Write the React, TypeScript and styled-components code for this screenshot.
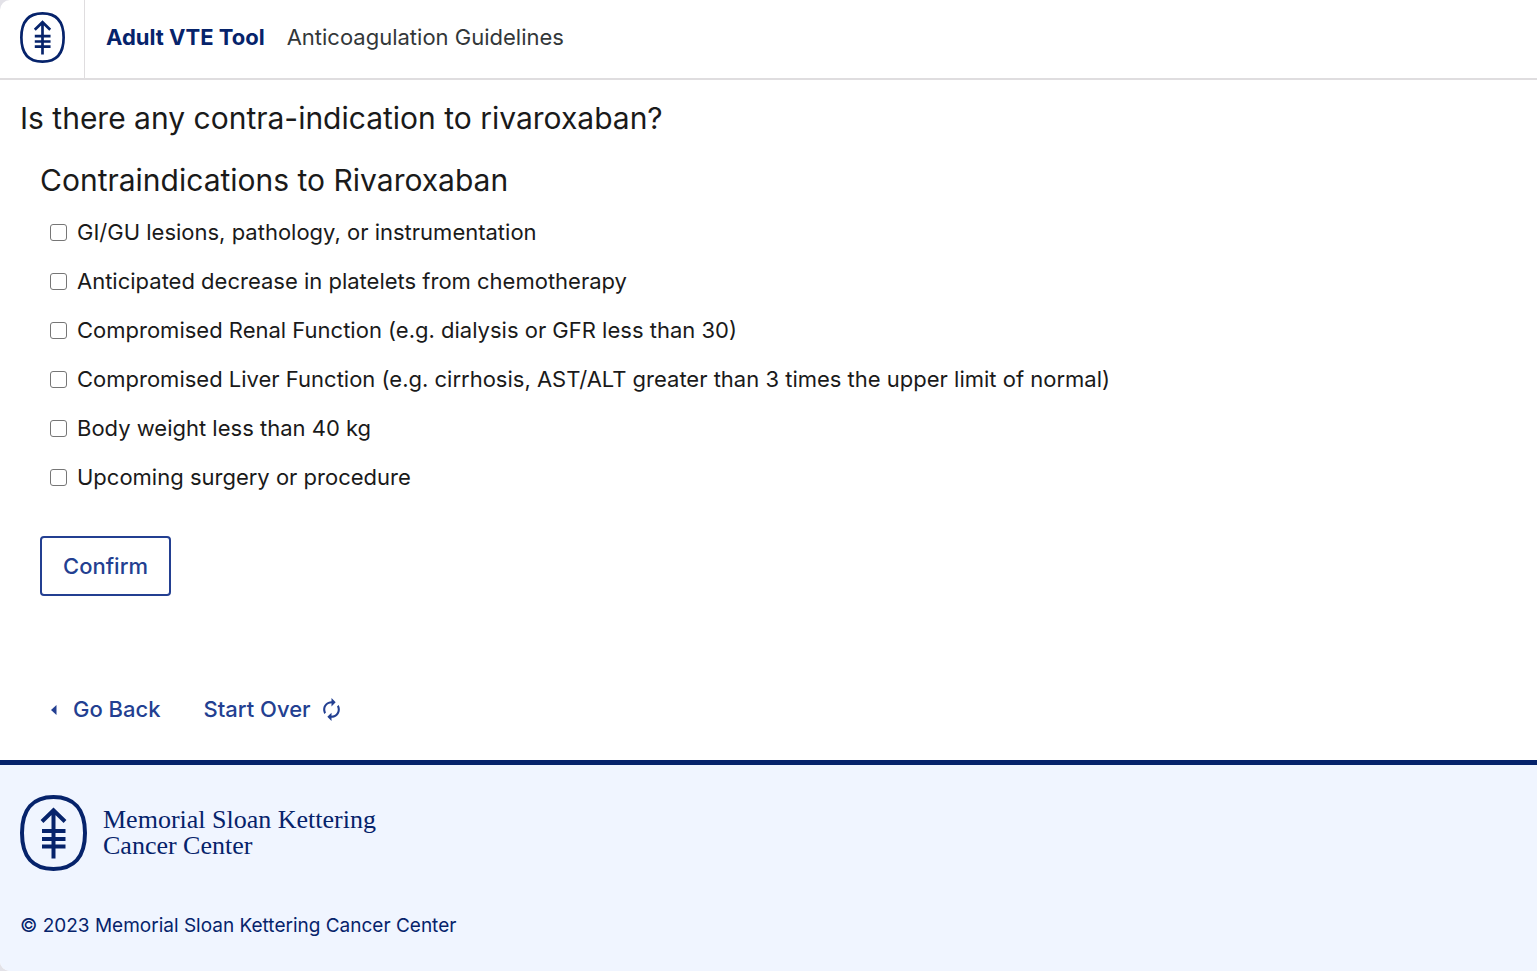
import React from "react";
import styled, { createGlobalStyle } from "styled-components";
import { MdAutorenew } from "react-icons/md";

const navy = "#06236b";
const blue = "#233f91";
const ink = "#1a1a1a";

const GlobalStyle = createGlobalStyle`
  *, *::before, *::after { box-sizing: border-box; }
  html { background: #e3e2e8; }
  body {
    margin: 0;
    color: ${ink};
    font-family: Inter, "Open Sans", sans-serif;
    font-size: 22px;
    line-height: 29px;
  }
`;

const Page = styled.div`
  display: flex;
  flex-direction: column;
  min-height: 100vh;
  overflow: hidden;
  background: #fff;
  border-radius: 10px 0 0 10px;
`;

const Header = styled.header`
  display: flex;
  align-items: stretch;
  min-height: 80px;
  border-bottom: 2px solid #dfdddf;
`;

const HomeLink = styled.a`
  display: flex;
  align-items: flex-start;
  padding: 12px 19px 0 20px;
  border-right: 1px solid #dfdddf;
`;

const Nav = styled.nav`
  display: flex;
  align-items: flex-start;
  gap: 22px;
  padding: 23px 21px 0;
`;

const NavLink = styled.a<{ $strong?: boolean }>`
  color: ${(p) => (p.$strong ? navy : "#333739")};
  font-weight: ${(p) => (p.$strong ? 700 : 400)};
  text-decoration: none;
`;

const Main = styled.main`
  padding: 18px 20px 36px;
`;

const Question = styled.h1`
  margin: 0 0 22px;
  font-size: 30px;
  font-weight: 400;
  line-height: 40px;
`;

const Form = styled.form`
  padding-left: 20px;
`;

const Group = styled.fieldset`
  margin: 0;
  padding: 0;
  border: 0;
`;

const GroupTitle = styled.legend`
  padding: 0;
  font-size: 30px;
  line-height: 40px;
`;

const Options = styled.ul`
  display: grid;
  gap: 20px;
  margin: 18px 0 0;
  padding: 0 0 0 10px;
  list-style: none;
`;

const Option = styled.label`
  display: flex;
  align-items: center;
  gap: 10px;
`;

const CheckBox = styled.input`
  appearance: none;
  flex: none;
  width: 17px;
  height: 17px;
  margin: 0;
  background: #fff;
  border: 1px solid #767676;
  border-radius: 3px;

  &:checked {
    background: ${blue};
    border-color: ${blue};
  }
`;

const ConfirmButton = styled.button`
  min-width: 131px;
  height: 60px;
  margin-top: 44px;
  padding: 0 20px;
  color: ${blue};
  background: #fff;
  border: 2px solid ${blue};
  border-radius: 4px;
  font: inherit;
  font-weight: 500;
  cursor: pointer;
`;

const Actions = styled.div`
  display: flex;
  gap: 43px;
  margin-top: 99px;
  padding-left: 30px;
`;

const Action = styled.a`
  display: inline-flex;
  align-items: center;
  color: ${blue};
  font-weight: 500;
  text-decoration: none;
`;

const BackIcon = styled.svg`
  width: 7px;
  height: 10px;
  margin-right: 16px;
`;

const RestartIcon = styled(MdAutorenew)`
  width: 25px;
  height: 25px;
  margin-left: 8px;
`;

const Footer = styled.footer`
  flex: 1;
  padding: 30px 20px;
  color: ${navy};
  background: #f0f5ff;
  border-top: 5px solid ${navy};
`;

const Brand = styled.a`
  display: flex;
  align-items: center;
  gap: 16px;
  width: fit-content;
  color: inherit;
  font-family: "Liberation Serif", serif;
  font-size: 26px;
  line-height: 26px;
  text-decoration: none;
`;

const Copyright = styled.p`
  margin: 40px 0 0;
  font-size: 19px;
  line-height: 29px;
`;

function Emblem({ width, height }: { width: number; height: number }) {
  return (
    <svg width={width} height={height} viewBox="0 0 67 76" fill="none" stroke={navy} aria-hidden="true">
      <path
        d="M33.5 2C54 2 65 14 65 38S54 74 33.5 74 2 62 2 38 13 2 33.5 2Z"
        strokeWidth="4"
      />
      <path
        d="M33.5 15V63.500M22 26.500 33.500 15.200 45 26.500M22 36H45.500M22 44H45.500M22 51.500H45.500"
        strokeWidth="4"
      />
    </svg>
  );
}

const contraindications = [
  "GI/GU lesions, pathology, or instrumentation",
  "Anticipated decrease in platelets from chemotherapy",
  "Compromised Renal Function (e.g. dialysis or GFR less than 30)",
  "Compromised Liver Function (e.g. cirrhosis, AST/ALT greater than 3 times the upper limit of normal)",
  "Body weight less than 40 kg",
  "Upcoming surgery or procedure",
];

export default function App() {
  return (
    <Page>
      <GlobalStyle />
      <Header>
        <HomeLink href="#" aria-label="Home">
          <Emblem width={45} height={51} />
        </HomeLink>
        <Nav>
          <NavLink href="#" $strong>Adult VTE Tool</NavLink>
          <NavLink href="#">Anticoagulation Guidelines</NavLink>
        </Nav>
      </Header>
      <Main>
        <Question>Is there any contra-indication to rivaroxaban?</Question>
        <Form onSubmit={(e) => e.preventDefault()}>
          <Group>
            <GroupTitle>Contraindications to Rivaroxaban</GroupTitle>
            <Options>
              {contraindications.map((text, i) => (
                <li key={text}>
                  <Option htmlFor={`option-${i}`}>
                    <CheckBox type="checkbox" id={`option-${i}`} />
                    {text}
                  </Option>
                </li>
              ))}
            </Options>
          </Group>
          <ConfirmButton type="submit">Confirm</ConfirmButton>
        </Form>
        <Actions>
          <Action href="#">
            <BackIcon viewBox="0 0 7 10" fill="currentColor" aria-hidden="true">
              <path d="M6.500 0V10L1 5Z" />
            </BackIcon>
            Go Back
          </Action>
          <Action href="#">
            Start Over
            <RestartIcon aria-hidden="true" />
          </Action>
        </Actions>
      </Main>
      <Footer>
        <Brand href="#">
          <Emblem width={67} height={76} />
          <span>
            Memorial Sloan Kettering
            <br />
            Cancer Center
          </span>
        </Brand>
        <Copyright>© 2023 Memorial Sloan Kettering Cancer Center</Copyright>
      </Footer>
    </Page>
  );
}
